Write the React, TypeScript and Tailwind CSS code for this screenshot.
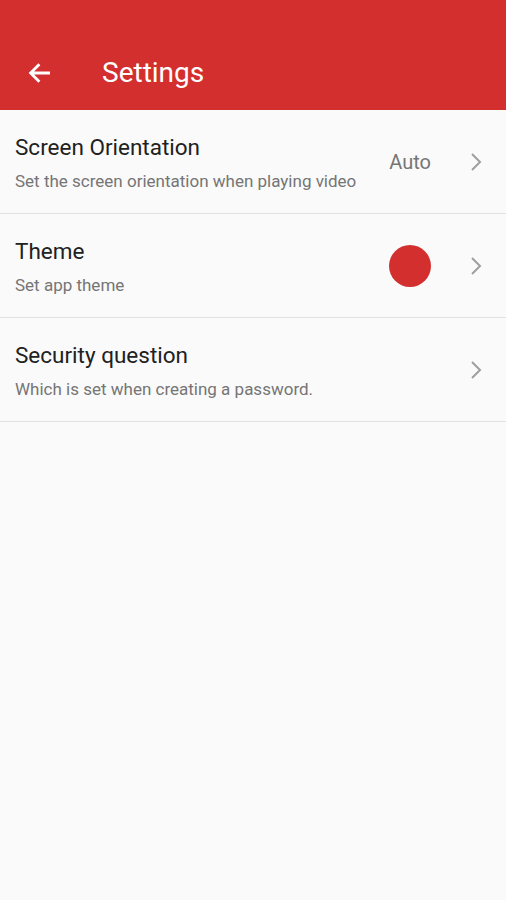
import React from 'react';

interface RowProps {
  title: string;
  subtitle: string;
  right?: React.ReactNode;
}

const Chevron = () => (
  <svg width="14" height="20" viewBox="0 0 14 20" fill="none" className="text-[#9e9e9e]">
    <path d="M3 2 L11 10 L3 18" stroke="currentColor" strokeWidth="2" />
  </svg>
);

const Row: React.FC<RowProps> = ({ title, subtitle, right }) => (
  <div className="flex items-center h-[104px] border-b border-[#e0e0e0] pl-[15px] pr-[23px]">
    <div className="flex-1 flex flex-col pt-[2px]">
      <div className="text-[22.5px] leading-[26px] text-[#212121]">{title}</div>
      <div className="text-[17px] leading-[20px] text-[#757575] mt-[11px]">{subtitle}</div>
    </div>
    {right}
    <div className="ml-[38px] flex items-center">
      <Chevron />
    </div>
  </div>
);

export default function App() {
  return (
    <div className="w-[506px] h-[900px] bg-[#fafafa] font-['Roboto',sans-serif]">
      <div className="h-[110px] bg-[#d32f2f] flex items-end pb-[19px] pl-[25px]">
        <svg width="30" height="30" viewBox="0 0 24 24" fill="none" className="text-white mb-[3px]">
          <path d="M20 12H4.5M11.5 5l-7 7 7 7" stroke="currentColor" strokeWidth="2.3" />
        </svg>
        <span className="ml-[47px] text-white text-[28px] leading-[36px]">Settings</span>
      </div>
      <Row
        title="Screen Orientation"
        subtitle="Set the screen orientation when playing video"
        right={<span className="text-[20px] text-[#757575]">Auto</span>}
      />
      <Row
        title="Theme"
        subtitle="Set app theme"
        right={<div className="w-[42px] h-[42px] rounded-full bg-[#d32f2f]" />}
      />
      <Row title="Security question" subtitle="Which is set when creating a password." />
    </div>
  );
}
